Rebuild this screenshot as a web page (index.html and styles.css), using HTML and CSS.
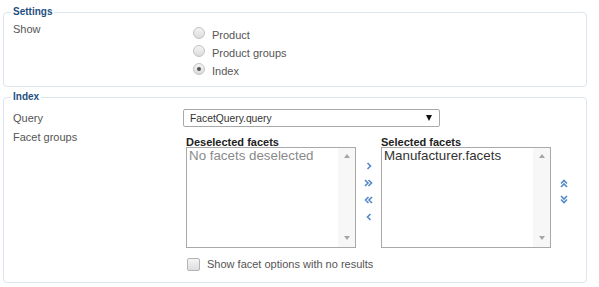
FILE: index.html
```html
<!DOCTYPE html>
<html lang="en">
<head>
    <meta charset="UTF-8">
    <title>Facet settings</title>
    <link rel="stylesheet" href="styles.css">
</head>
<body>
    <div class="page">
        <fieldset class="group settings">
            <legend>Settings</legend>
            <div class="row">
                <div class="label">Show</div>
                <div class="radios">
                    <div class="radio"><span class="dot"></span>Product</div>
                    <div class="radio"><span class="dot"></span>Product groups</div>
                    <div class="radio"><span class="dot checked"></span>Index</div>
                </div>
            </div>
        </fieldset>

        <fieldset class="group index">
            <legend>Index</legend>
            <div class="row query-row">
                <div class="label">Query</div>
                <div class="select">
                    <span>FacetQuery.query</span>
                    <span class="caret"></span>
                </div>
            </div>
            <div class="row facet-row">
                <div class="label">Facet groups</div>
                <div class="facets">
                    <div class="lists">
                        <div class="list-col">
                            <div class="list-title">Deselected facets</div>
                            <div class="listbox">
                                <div class="items muted">No facets deselected</div>
                                <div class="scroll"><span class="tri up"></span><span class="tri down"></span></div>
                            </div>
                        </div>
                        <div class="movers">
                            <!-- move one right -->
                            <svg width="6" height="8" viewBox="0 0 6 8"><path d="M1.5 1l3 3-3 3"/></svg>
                            <!-- move all right -->
                            <svg width="9" height="8" viewBox="0 0 9 8"><path d="M1 1l3 3-3 3M4.5 1l3 3-3 3"/></svg>
                            <!-- move all left -->
                            <svg width="9" height="8" viewBox="0 0 9 8"><path d="M4.5 1l-3 3 3 3M8 1l-3 3 3 3"/></svg>
                            <!-- move one left -->
                            <svg width="6" height="8" viewBox="0 0 6 8"><path d="M4.5 1l-3 3 3 3"/></svg>
                        </div>
                        <div class="list-col">
                            <div class="list-title">Selected facets</div>
                            <div class="listbox">
                                <div class="items">Manufacturer.facets</div>
                                <div class="scroll"><span class="tri up"></span><span class="tri down"></span></div>
                            </div>
                        </div>
                        <div class="movers order">
                            <svg width="8" height="9" viewBox="0 0 8 9"><path d="M1 4.5l3-3 3 3M1 8l3-3 3 3"/></svg>
                            <svg width="8" height="9" viewBox="0 0 8 9"><path d="M1 1l3 3 3-3M1 4.5l3 3 3-3"/></svg>
                        </div>
                    </div>
                    <div class="check-row">
                        <span class="box"></span>Show facet options with no results
                    </div>
                </div>
            </div>
        </fieldset>
    </div>
</body>
</html>
```

FILE: styles.css
```css
body {
    margin: 0;
    background: #fff;
    font-family: "Liberation Sans", Arial, sans-serif;
    font-size: 11px;
    color: #555;
}

.page {
    width: 584px;
    margin: 6px 0 0 3px;
}

.group {
    margin: 0;
    padding: 0 9px;
    border: 1px solid #dde5ed;
    border-radius: 4px;
    min-width: 0;
}

.group legend {
    padding: 0 2px;
    margin-left: -2px;
    font-size: 10px;
    line-height: 12px;
    font-weight: bold;
    color: #1f4f82;
}

.index {
    margin-top: 4px;
}

.row {
    display: grid;
    grid-template-columns: 170px auto;
}

.label {
    line-height: 13px;
}

/* settings */
.settings .row {
    padding: 5px 0 6px;
}

.radios {
    margin-top: 3px;
    padding-left: 10px;
}

.radio {
    display: flex;
    align-items: center;
    height: 18px;
}

.dot {
    width: 10px;
    height: 10px;
    margin: 0 7px 4px 0;
    border: 1px solid #c3c3c3;
    border-radius: 50%;
    background: linear-gradient(#f4f4f4, #dcdcdc);
    display: grid;
    place-items: center;
}

.dot.checked::after {
    content: "";
    width: 4px;
    height: 4px;
    border-radius: 50%;
    background: #555;
}

/* index */
.query-row {
    margin-top: 6px;
    align-items: center;
}

.select {
    width: 249px;
    height: 16px;
    border: 1px solid #a9a9a9;
    border-radius: 2px;
    display: flex;
    align-items: center;
    justify-content: space-between;
    padding: 0 0 0 6px;
    font-size: 10.3px;
    color: #333;
}

.caret {
    width: 0;
    height: 0;
    margin-right: 7px;
    border-left: 3.5px solid transparent;
    border-right: 3.5px solid transparent;
    border-top: 6px solid #111;
}

.facet-row {
    margin-top: 4px;
    padding-bottom: 11px;
}

.facets {
    padding-left: 3px;
}

.lists {
    display: flex;
}

.list-title {
    padding-top: 6px;
    line-height: 10px;
    font-weight: bold;
    color: #222;
}

.listbox {
    width: 168px;
    height: 99px;
    border: 1px solid #a9a9a9;
    display: flex;
}

.items {
    flex: 1;
    padding-left: 2px;
    font-size: 13.33px;
    line-height: 15px;
    color: #333;
}

.items.muted {
    color: #8a8a8a;
}

.scroll {
    width: 17px;
    background: #f7f7f7;
    display: flex;
    flex-direction: column;
    justify-content: space-between;
    align-items: center;
    padding: 6px 0 7px;
}

.tri {
    width: 0;
    height: 0;
    border-left: 3.5px solid transparent;
    border-right: 3.5px solid transparent;
}

.tri.up {
    border-bottom: 4px solid #a6a6a6;
}

.tri.down {
    border-top: 4px solid #a6a6a6;
}

.movers {
    width: 25px;
    padding-top: 26px;
    display: grid;
    grid-auto-rows: 17px;
    justify-items: center;
    align-items: center;
    align-content: start;
}

.movers.order {
    width: 26px;
    padding-top: 44px;
    grid-auto-rows: 16px;
}

.movers path {
    fill: none;
    stroke: #5588c8;
    stroke-width: 1.6;
}

.check-row {
    margin-top: 9px;
    height: 14px;
    display: flex;
    align-items: center;
    padding-left: 1px;
}

.box {
    width: 11px;
    height: 11px;
    margin-right: 7px;
    border: 1px solid #b4b4b4;
    border-radius: 2px;
    background: linear-gradient(#f5f5f5, #dddddd);
}
```
